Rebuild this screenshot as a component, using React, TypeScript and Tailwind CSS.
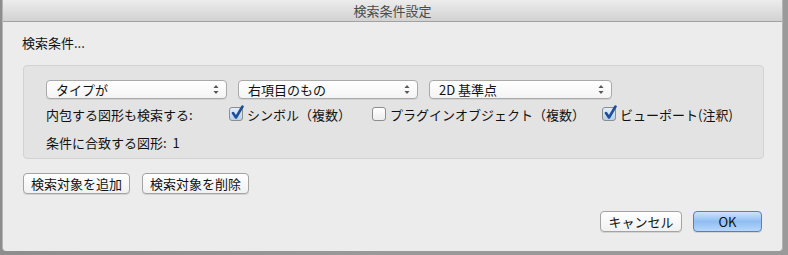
const font = { fontFamily: '"Noto Sans CJK JP", "Noto Sans", sans-serif' };

function Select({ label, width }: { label: string; width: string }) {
  return (
    <div
      className={`${width} flex h-[19px] items-center justify-between rounded-[4px] border border-[#a9a9a9] bg-gradient-to-b from-white to-[#f4f4f4] pl-[9px] pr-[7px] shadow-[0_1px_0_rgba(0,0,0,0.08)]`}
    >
      <span className="text-[13px] leading-none text-[#111]">{label}</span>
      <svg width="6" height="11" viewBox="0 0 6 11">
        <path d="M3 1 L5.5 4 H0.5 Z" fill="#555" />
        <path d="M3 10 L5.5 7 H0.5 Z" fill="#555" />
      </svg>
    </div>
  );
}

function Check({ checked, label, width }: { checked: boolean; label: string; width: string }) {
  return (
    <div className={`${width} flex items-center`}>
      <div
        className={`relative mr-[4px] h-[14px] w-[14px] rounded-[3px] border border-[#8d8d8d] bg-gradient-to-b ${
          checked ? "from-[#e4eefa] to-[#b8cfeb]" : "from-white to-[#eeeeee]"
        }`}
      >
        {checked && (
          <svg className="absolute -top-[3px] left-[1px]" width="13" height="15" viewBox="0 0 13 15">
            <path
              d="M2 8 L5 12.5 L11.5 1.5"
              fill="none"
              stroke="#1d4f97"
              strokeWidth="2.6"
              strokeLinecap="round"
              strokeLinejoin="round"
            />
          </svg>
        )}
      </div>
      <span className="text-[13px] leading-none text-[#111]">{label}</span>
    </div>
  );
}

function Button({ label, width, primary }: { label: string; width: string; primary?: boolean }) {
  return (
    <div
      className={`${width} flex h-[21px] items-center justify-center rounded-[4px] border text-[13px] leading-none text-[#111] shadow-[0_1px_0_rgba(0,0,0,0.1)] ${
        primary
          ? "border-[#5b7fb3] bg-gradient-to-b from-[#cfe3fb] via-[#8fbdf2] to-[#b7d7fb]"
          : "border-[#a3a3a3] bg-gradient-to-b from-white to-[#f1f1f1]"
      }`}
    >
      {label}
    </div>
  );
}

export default function App() {
  return (
    <div className="h-[255px] w-[788px] bg-gradient-to-r from-[#8d8d8d] via-[#9a9a9a] to-[#9a9a9a] pb-[4px] pl-[2px] pr-[5px]" style={font}>
      <div className="flex h-full flex-col rounded-b-[4px] border-l border-r border-[#b5b5b5] bg-[#ececec]">
        <div className="flex h-[22px] items-center justify-center border-b border-[#a2a2a2] bg-gradient-to-b from-[#ececec] to-[#d2d2d2] text-[13px] text-[#4a4a4a]">
          検索条件設定
        </div>
        <div className="flex flex-1 flex-col px-[19px]">
          <div className="mt-[13px] h-[16px] text-[13px] leading-[16px] text-[#111]">検索条件...</div>
          <div className="ml-px mt-[14px] flex h-[94px] w-[741px] flex-col rounded-[4px] border border-[#d2d2d2] bg-[#e3e3e3] pl-[22px] pt-[14px]">
            <div className="flex gap-[11px]">
              <Select label="タイプが" width="w-[181px]" />
              <Select label="右項目のもの" width="w-[180px]" />
              <Select label="2D 基準点" width="w-[183px]" />
            </div>
            <div className="mt-[7px] flex h-[16px] items-center">
              <span className="w-[183px] text-[13px] leading-none text-[#111]">内包する図形も検索する:</span>
              <Check checked label="シンボル（複数）" width="w-[143px]" />
              <Check checked={false} label="プラグインオブジェクト（複数）" width="w-[230px]" />
              <Check checked label="ビューポート(注釈)" width="w-[140px]" />
            </div>
            <div className="mt-[12px] flex h-[16px] items-center text-[13px] leading-none text-[#111]">
              条件に合致する図形:&nbsp;&nbsp;1
            </div>
          </div>
          <div className="ml-px mt-[14px] flex gap-[12px]">
            <Button label="検索対象を追加" width="w-[107px]" />
            <Button label="検索対象を削除" width="w-[107px]" />
          </div>
          <div className="mt-[17px] flex justify-end gap-[11px] pr-[1px]">
            <Button label="キャンセル" width="w-[82px]" />
            <Button label="OK" width="w-[69px]" primary />
          </div>
        </div>
      </div>
    </div>
  );
}
